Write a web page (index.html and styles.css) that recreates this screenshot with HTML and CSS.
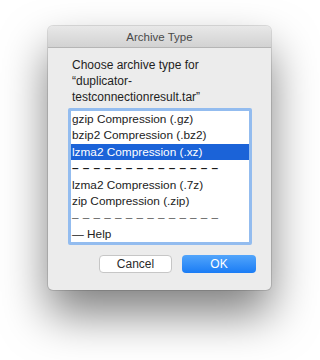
FILE: index.html
```html
<!DOCTYPE html>
<html>
<head>
    <meta charset="UTF-8">
    <title>Archive Type</title>
    <link rel="stylesheet" href="styles.css">
</head>
<body>
    <div class="dialog">
        <div class="title-bar">Archive Type</div>
        <div class="dialog-body">
            <p class="prompt">Choose archive type for &ldquo;duplicator-testconnectionresult.tar&rdquo;</p>
            <div class="list-box">
                <div class="list-item">gzip Compression (.gz)</div>
                <div class="list-item">bzip2 Compression (.bz2)</div>
                <div class="list-item selected">lzma2 Compression (.xz)</div>
                <div class="list-item separator">&ndash; &ndash; &ndash; &ndash; &ndash; &ndash; &ndash; &ndash; &ndash; &ndash; &ndash; &ndash; &ndash; &ndash;</div>
                <div class="list-item">lzma2 Compression (.7z)</div>
                <div class="list-item">zip Compression (.zip)</div>
                <div class="list-item separator light">&ndash; &ndash; &ndash; &ndash; &ndash; &ndash; &ndash; &ndash; &ndash; &ndash; &ndash; &ndash; &ndash; &ndash;</div>
                <div class="list-item">&mdash; Help</div>
            </div>
            <div class="button-row">
                <button class="btn">Cancel</button>
                <button class="btn btn-default">OK</button>
            </div>
        </div>
    </div>
</body>
</html>
```

FILE: styles.css
```css
html {
    height: 100%;
}
body {
    font-family: "Liberation Sans", Arial, sans-serif;
    background-color: #ffffff;
    margin: 0;
    padding: 26px 0 0 48px;
    min-height: 100%;
    box-sizing: border-box;
}
.dialog {
    width: 223px;
    height: 264px;
    box-sizing: border-box;
    background: #ececec;
    border-radius: 5px;
    box-shadow: 0 0 0 1px rgba(0,0,0,0.12), 0 24px 46px rgba(0,0,0,0.5);
}
.title-bar {
    height: 21px;
    line-height: 22px;
    text-align: center;
    font-size: 11.5px;
    color: #4a4a4a;
    background: linear-gradient(#e8e8e8, #d2d2d2);
    border-bottom: 1px solid #b5b5b5;
    border-radius: 5px 5px 0 0;
}
.dialog-body {
    padding: 9px 15px 0 20px;
}
.prompt {
    margin: 0;
    padding-left: 4px;
    width: 180px;
    font-size: 12px;
    line-height: 16px;
    color: #1e1e1e;
}
.list-box {
    margin-top: 3px;
    width: 184px;
    height: 137px;
    box-sizing: border-box;
    background: #fff;
    border: 3px solid #93bcef;
    border-radius: 2px;
}
.list-item {
    height: 16.4px;
    line-height: 16.4px;
    padding-left: 1px;
    font-size: 11.8px;
    color: #222;
    white-space: nowrap;
}
.list-item.selected {
    background: #1b63d8;
    color: #fff;
}
.list-item.separator {
    color: #1a1a1a;
    font-weight: bold;
    letter-spacing: 0.45px;
}
.list-item.separator.light {
    color: #555;
    font-weight: normal;
}
.button-row {
    display: flex;
    justify-content: flex-end;
    gap: 10px;
    margin-top: 10px;
}
.btn {
    width: 73px;
    height: 18px;
    padding: 0;
    font-family: inherit;
    font-size: 12px;
    color: #2a2a2a;
    background: #fff;
    border: 1px solid #c6c6c6;
    border-radius: 4px;
}
.btn-default {
    width: 74px;
    color: #fff;
    border: none;
    background: linear-gradient(#52a5fb, #1a7cf5);
}
```
